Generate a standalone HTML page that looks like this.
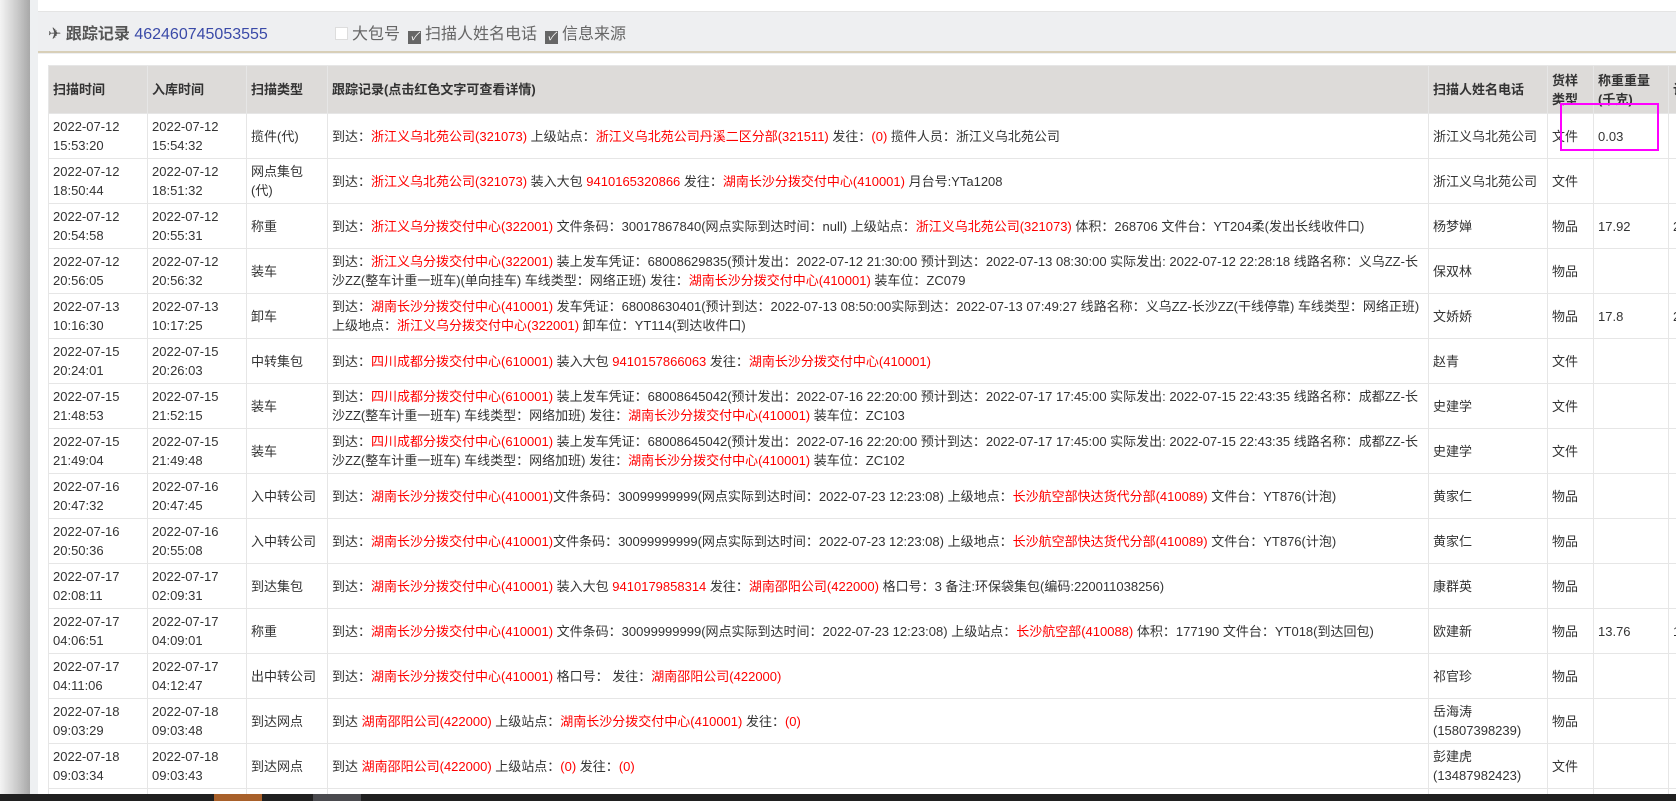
<!DOCTYPE html>
<html><head><meta charset="utf-8"><style>
*{margin:0;padding:0;box-sizing:border-box}
body{width:1676px;height:801px;overflow:hidden;background:#eef0f2;font-family:"Liberation Sans","Noto Sans CJK SC",sans-serif;font-size:13px;color:#333;position:relative}
.strip{position:absolute;left:0;top:0;width:30px;height:801px;background:linear-gradient(90deg,#f4f4f4,#c8c8c8 60%,#a8a8a8)}
.card{position:absolute;left:38px;top:0;right:0;height:794px;background:#eeeff1}
.topbox{position:absolute;left:38px;top:0;right:0;height:12px;background:#fff;border-bottom:1px solid #e4e4e4}
.hdr{position:absolute;left:48px;top:20px;font-size:16px;color:#555;white-space:nowrap}
.hdr b{font-weight:bold;color:#555}
.hdr .num{color:#3a4aa8}
.cb{display:inline-block;width:13px;height:13px;vertical-align:-1px;margin-right:4px}
.cb.on{background:#666;color:#fff;font-size:11px;line-height:13px;text-align:center}
.cb.off{background:#fff;border:1px solid #ddd}
.opts{position:absolute;left:335px;top:20px;font-size:16px;color:#666}
.opts span{margin-right:8px}
.line{position:absolute;left:38px;right:0;top:51px;height:2px;background:#d8cfb8}
.wrap{position:absolute;left:38px;right:0;top:54px;height:740px;background:#fff;overflow:hidden}
table{position:absolute;left:10px;top:11px;border-collapse:collapse;table-layout:fixed;width:1700px}
th,td{border:1px solid #e6e6e6;text-align:left;vertical-align:middle;padding:0 4px;line-height:19px;overflow:hidden}
th{background:#dddbd9;height:48px;font-weight:bold;color:#333}
td{height:45px;white-space:nowrap}
td.w{white-space:normal}
.r{color:#f00}
.mag{position:absolute;left:1560px;top:103px;width:99px;height:48px;border:2px solid #f0f}
.task{position:absolute;left:0;top:794px;width:1676px;height:7px;background:#202020}
</style></head><body>
<div class="strip"></div>
<div class="card"></div>
<div class="topbox"></div>
<div class="hdr">✈ <b>跟踪记录</b> <span class="num">462460745053555</span></div>
<div class="opts"><span><i class="cb off"></i>大包号</span><span><i class="cb on">✓</i>扫描人姓名电话</span><span><i class="cb on">✓</i>信息来源</span></div>
<div class="line"></div>
<div class="wrap">
<table>
<colgroup><col style="width:99px"><col style="width:99px"><col style="width:81px"><col style="width:1101px"><col style="width:119px"><col style="width:46px"><col style="width:75px"><col style="width:80px"></colgroup>
<tr><th>扫描时间</th><th>入库时间</th><th>扫描类型</th><th>跟踪记录(点击红色文字可查看详情)</th><th>扫描人姓名电话</th><th class="w" style="white-space:normal">货样类型</th><th style="white-space:normal">称重重量(千克)</th><th>计(</th></tr>
<tr><td>2022-07-12<br>15:53:20</td><td>2022-07-12<br>15:54:32</td><td>揽件(代)</td><td>到达：<span class="r">浙江义乌北苑公司(321073)</span> 上级站点：<span class="r">浙江义乌北苑公司丹溪二区分部(321511)</span> 发往：<span class="r">(0)</span> 揽件人员：浙江义乌北苑公司</td><td>浙江义乌北苑公司</td><td>文件</td><td>0.03</td><td></td></tr>
<tr><td>2022-07-12<br>18:50:44</td><td>2022-07-12<br>18:51:32</td><td class="w">网点集包(代)</td><td>到达：<span class="r">浙江义乌北苑公司(321073)</span> 装入大包 <span class="r">9410165320866</span> 发往：<span class="r">湖南长沙分拨交付中心(410001)</span> 月台号:YTa1208</td><td>浙江义乌北苑公司</td><td>文件</td><td></td><td></td></tr>
<tr><td>2022-07-12<br>20:54:58</td><td>2022-07-12<br>20:55:31</td><td>称重</td><td>到达：<span class="r">浙江义乌分拨交付中心(322001)</span> 文件条码：30017867840(网点实际到达时间：null) 上级站点：<span class="r">浙江义乌北苑公司(321073)</span> 体积：268706 文件台：YT204柔(发出长线收件口)</td><td>杨梦婵</td><td>物品</td><td>17.92</td><td>2</td></tr>
<tr><td>2022-07-12<br>20:56:05</td><td>2022-07-12<br>20:56:32</td><td>装车</td><td class="w">到达：<span class="r">浙江义乌分拨交付中心(322001)</span> 装上发车凭证：68008629835(预计发出：2022-07-12 21:30:00 预计到达：2022-07-13 08:30:00 实际发出: 2022-07-12 22:28:18 线路名称：义乌ZZ-长沙ZZ(整车计重一班车)(单向挂车) 车线类型：网络正班) 发往：<span class="r">湖南长沙分拨交付中心(410001)</span> 装车位：ZC079</td><td>保双林</td><td>物品</td><td></td><td></td></tr>
<tr><td>2022-07-13<br>10:16:30</td><td>2022-07-13<br>10:17:25</td><td>卸车</td><td class="w">到达：<span class="r">湖南长沙分拨交付中心(410001)</span> 发车凭证：68008630401(预计到达：2022-07-13 08:50:00实际到达：2022-07-13 07:49:27 线路名称：义乌ZZ-长沙ZZ(干线停靠) 车线类型：网络正班)<br>上级地点：<span class="r">浙江义乌分拨交付中心(322001)</span> 卸车位：YT114(到达收件口)</td><td>文娇娇</td><td>物品</td><td>17.8</td><td>2</td></tr>
<tr><td>2022-07-15<br>20:24:01</td><td>2022-07-15<br>20:26:03</td><td>中转集包</td><td>到达：<span class="r">四川成都分拨交付中心(610001)</span> 装入大包 <span class="r">9410157866063</span> 发往：<span class="r">湖南长沙分拨交付中心(410001)</span></td><td>赵青</td><td>文件</td><td></td><td></td></tr>
<tr><td>2022-07-15<br>21:48:53</td><td>2022-07-15<br>21:52:15</td><td>装车</td><td class="w">到达：<span class="r">四川成都分拨交付中心(610001)</span> 装上发车凭证：68008645042(预计发出：2022-07-16 22:20:00 预计到达：2022-07-17 17:45:00 实际发出: 2022-07-15 22:43:35 线路名称：成都ZZ-长沙ZZ(整车计重一班车) 车线类型：网络加班) 发往：<span class="r">湖南长沙分拨交付中心(410001)</span> 装车位：ZC103</td><td>史建学</td><td>文件</td><td></td><td></td></tr>
<tr><td>2022-07-15<br>21:49:04</td><td>2022-07-15<br>21:49:48</td><td>装车</td><td class="w">到达：<span class="r">四川成都分拨交付中心(610001)</span> 装上发车凭证：68008645042(预计发出：2022-07-16 22:20:00 预计到达：2022-07-17 17:45:00 实际发出: 2022-07-15 22:43:35 线路名称：成都ZZ-长沙ZZ(整车计重一班车) 车线类型：网络加班) 发往：<span class="r">湖南长沙分拨交付中心(410001)</span> 装车位：ZC102</td><td>史建学</td><td>文件</td><td></td><td></td></tr>
<tr><td>2022-07-16<br>20:47:32</td><td>2022-07-16<br>20:47:45</td><td>入中转公司</td><td>到达：<span class="r">湖南长沙分拨交付中心(410001)</span>文件条码：30099999999(网点实际到达时间：2022-07-23 12:23:08) 上级地点：<span class="r">长沙航空部快达货代分部(410089)</span> 文件台：YT876(计泡)</td><td>黄家仁</td><td>物品</td><td></td><td></td></tr>
<tr><td>2022-07-16<br>20:50:36</td><td>2022-07-16<br>20:55:08</td><td>入中转公司</td><td>到达：<span class="r">湖南长沙分拨交付中心(410001)</span>文件条码：30099999999(网点实际到达时间：2022-07-23 12:23:08) 上级地点：<span class="r">长沙航空部快达货代分部(410089)</span> 文件台：YT876(计泡)</td><td>黄家仁</td><td>物品</td><td></td><td></td></tr>
<tr><td>2022-07-17<br>02:08:11</td><td>2022-07-17<br>02:09:31</td><td>到达集包</td><td>到达：<span class="r">湖南长沙分拨交付中心(410001)</span> 装入大包 <span class="r">9410179858314</span> 发往：<span class="r">湖南邵阳公司(422000)</span> 格口号：3 备注:环保袋集包(编码:220011038256)</td><td>康群英</td><td>物品</td><td></td><td></td></tr>
<tr><td>2022-07-17<br>04:06:51</td><td>2022-07-17<br>04:09:01</td><td>称重</td><td>到达：<span class="r">湖南长沙分拨交付中心(410001)</span> 文件条码：30099999999(网点实际到达时间：2022-07-23 12:23:08) 上级站点：<span class="r">长沙航空部(410088)</span> 体积：177190 文件台：YT018(到达回包)</td><td>欧建新</td><td>物品</td><td>13.76</td><td>1</td></tr>
<tr><td>2022-07-17<br>04:11:06</td><td>2022-07-17<br>04:12:47</td><td>出中转公司</td><td>到达：<span class="r">湖南长沙分拨交付中心(410001)</span> 格口号： 发往：<span class="r">湖南邵阳公司(422000)</span></td><td>祁官珍</td><td>物品</td><td></td><td></td></tr>
<tr><td>2022-07-18<br>09:03:29</td><td>2022-07-18<br>09:03:48</td><td>到达网点</td><td>到达 <span class="r">湖南邵阳公司(422000)</span> 上级站点：<span class="r">湖南长沙分拨交付中心(410001)</span> 发往：<span class="r">(0)</span></td><td>岳海涛<br>(15807398239)</td><td>物品</td><td></td><td></td></tr>
<tr><td>2022-07-18<br>09:03:34</td><td>2022-07-18<br>09:03:43</td><td>到达网点</td><td>到达 <span class="r">湖南邵阳公司(422000)</span> 上级站点：<span class="r">(0)</span> 发往：<span class="r">(0)</span></td><td>彭建虎<br>(13487982423)</td><td>文件</td><td></td><td></td></tr>
<tr><td></td><td></td><td></td><td></td><td></td><td></td><td></td><td></td></tr>
</table>
</div>
<div class="mag"></div>
<div class="task"><div style="position:absolute;left:214px;width:48px;height:7px;background:#a8602a"></div><div style="position:absolute;left:313px;width:48px;height:7px;background:#4a4a4e"></div></div>
</body></html>
